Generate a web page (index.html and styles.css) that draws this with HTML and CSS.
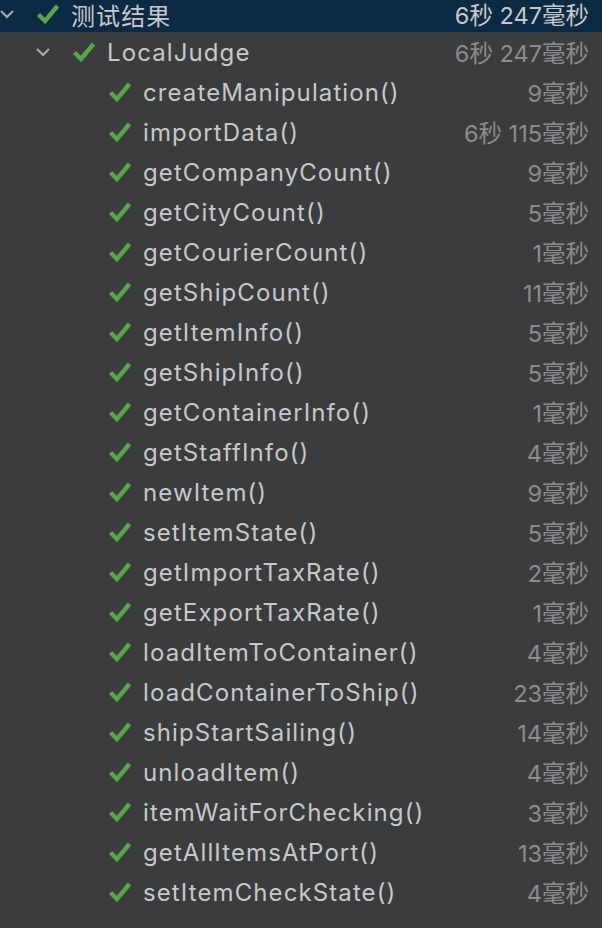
FILE: index.html
```html
<!DOCTYPE html>
<html>
<head>
<meta charset="utf-8">
<link rel="stylesheet" href="styles.css">
</head>
<body>
<div class="tree">
  <div class="row root">
    <span class="chev"><svg viewBox="0 0 16 10" width="16" height="10"><path d="M2 2 L8 8 L14 2" fill="none" stroke="#a9abad" stroke-width="2"/></svg></span>
    <span class="check"><svg viewBox="0 0 24 22" width="24" height="22"><path d="M2.5 11.5 L9 18 L21.5 3" fill="none" stroke="#5aa54a" stroke-width="4.4"/></svg></span>
    <span class="name">测试结果</span>
    <span class="time">6秒 247毫秒</span>
  </div>
  <div class="row suite">
    <span class="chev"><svg viewBox="0 0 16 10" width="16" height="10"><path d="M2 2 L8 8 L14 2" fill="none" stroke="#a9abad" stroke-width="2"/></svg></span>
    <span class="check"><svg viewBox="0 0 24 22" width="24" height="22"><path d="M2.5 11.5 L9 18 L21.5 3" fill="none" stroke="#5aa54a" stroke-width="4.4"/></svg></span>
    <span class="name">LocalJudge</span>
    <span class="time">6秒 247毫秒</span>
  </div>
  <div class="row test"><span class="check"><svg viewBox="0 0 24 22" width="24" height="22"><path d="M2.5 11.5 L9 18 L21.5 3" fill="none" stroke="#5aa54a" stroke-width="4.4"/></svg></span><span class="name">createManipulation()</span><span class="time">9毫秒</span></div>
  <div class="row test"><span class="check"><svg viewBox="0 0 24 22" width="24" height="22"><path d="M2.5 11.5 L9 18 L21.5 3" fill="none" stroke="#5aa54a" stroke-width="4.4"/></svg></span><span class="name">importData()</span><span class="time">6秒 115毫秒</span></div>
  <div class="row test"><span class="check"><svg viewBox="0 0 24 22" width="24" height="22"><path d="M2.5 11.5 L9 18 L21.5 3" fill="none" stroke="#5aa54a" stroke-width="4.4"/></svg></span><span class="name">getCompanyCount()</span><span class="time">9毫秒</span></div>
  <div class="row test"><span class="check"><svg viewBox="0 0 24 22" width="24" height="22"><path d="M2.5 11.5 L9 18 L21.5 3" fill="none" stroke="#5aa54a" stroke-width="4.4"/></svg></span><span class="name">getCityCount()</span><span class="time">5毫秒</span></div>
  <div class="row test"><span class="check"><svg viewBox="0 0 24 22" width="24" height="22"><path d="M2.5 11.5 L9 18 L21.5 3" fill="none" stroke="#5aa54a" stroke-width="4.4"/></svg></span><span class="name">getCourierCount()</span><span class="time">1毫秒</span></div>
  <div class="row test"><span class="check"><svg viewBox="0 0 24 22" width="24" height="22"><path d="M2.5 11.5 L9 18 L21.5 3" fill="none" stroke="#5aa54a" stroke-width="4.4"/></svg></span><span class="name">getShipCount()</span><span class="time">11毫秒</span></div>
  <div class="row test"><span class="check"><svg viewBox="0 0 24 22" width="24" height="22"><path d="M2.5 11.5 L9 18 L21.5 3" fill="none" stroke="#5aa54a" stroke-width="4.4"/></svg></span><span class="name">getItemInfo()</span><span class="time">5毫秒</span></div>
  <div class="row test"><span class="check"><svg viewBox="0 0 24 22" width="24" height="22"><path d="M2.5 11.5 L9 18 L21.5 3" fill="none" stroke="#5aa54a" stroke-width="4.4"/></svg></span><span class="name">getShipInfo()</span><span class="time">5毫秒</span></div>
  <div class="row test"><span class="check"><svg viewBox="0 0 24 22" width="24" height="22"><path d="M2.5 11.5 L9 18 L21.5 3" fill="none" stroke="#5aa54a" stroke-width="4.4"/></svg></span><span class="name">getContainerInfo()</span><span class="time">1毫秒</span></div>
  <div class="row test"><span class="check"><svg viewBox="0 0 24 22" width="24" height="22"><path d="M2.5 11.5 L9 18 L21.5 3" fill="none" stroke="#5aa54a" stroke-width="4.4"/></svg></span><span class="name">getStaffInfo()</span><span class="time">4毫秒</span></div>
  <div class="row test"><span class="check"><svg viewBox="0 0 24 22" width="24" height="22"><path d="M2.5 11.5 L9 18 L21.5 3" fill="none" stroke="#5aa54a" stroke-width="4.4"/></svg></span><span class="name">newItem()</span><span class="time">9毫秒</span></div>
  <div class="row test"><span class="check"><svg viewBox="0 0 24 22" width="24" height="22"><path d="M2.5 11.5 L9 18 L21.5 3" fill="none" stroke="#5aa54a" stroke-width="4.4"/></svg></span><span class="name">setItemState()</span><span class="time">5毫秒</span></div>
  <div class="row test"><span class="check"><svg viewBox="0 0 24 22" width="24" height="22"><path d="M2.5 11.5 L9 18 L21.5 3" fill="none" stroke="#5aa54a" stroke-width="4.4"/></svg></span><span class="name">getImportTaxRate()</span><span class="time">2毫秒</span></div>
  <div class="row test"><span class="check"><svg viewBox="0 0 24 22" width="24" height="22"><path d="M2.5 11.5 L9 18 L21.5 3" fill="none" stroke="#5aa54a" stroke-width="4.4"/></svg></span><span class="name">getExportTaxRate()</span><span class="time">1毫秒</span></div>
  <div class="row test"><span class="check"><svg viewBox="0 0 24 22" width="24" height="22"><path d="M2.5 11.5 L9 18 L21.5 3" fill="none" stroke="#5aa54a" stroke-width="4.4"/></svg></span><span class="name">loadItemToContainer()</span><span class="time">4毫秒</span></div>
  <div class="row test"><span class="check"><svg viewBox="0 0 24 22" width="24" height="22"><path d="M2.5 11.5 L9 18 L21.5 3" fill="none" stroke="#5aa54a" stroke-width="4.4"/></svg></span><span class="name">loadContainerToShip()</span><span class="time">23毫秒</span></div>
  <div class="row test"><span class="check"><svg viewBox="0 0 24 22" width="24" height="22"><path d="M2.5 11.5 L9 18 L21.5 3" fill="none" stroke="#5aa54a" stroke-width="4.4"/></svg></span><span class="name">shipStartSailing()</span><span class="time">14毫秒</span></div>
  <div class="row test"><span class="check"><svg viewBox="0 0 24 22" width="24" height="22"><path d="M2.5 11.5 L9 18 L21.5 3" fill="none" stroke="#5aa54a" stroke-width="4.4"/></svg></span><span class="name">unloadItem()</span><span class="time">4毫秒</span></div>
  <div class="row test"><span class="check"><svg viewBox="0 0 24 22" width="24" height="22"><path d="M2.5 11.5 L9 18 L21.5 3" fill="none" stroke="#5aa54a" stroke-width="4.4"/></svg></span><span class="name">itemWaitForChecking()</span><span class="time">3毫秒</span></div>
  <div class="row test"><span class="check"><svg viewBox="0 0 24 22" width="24" height="22"><path d="M2.5 11.5 L9 18 L21.5 3" fill="none" stroke="#5aa54a" stroke-width="4.4"/></svg></span><span class="name">getAllItemsAtPort()</span><span class="time">13毫秒</span></div>
  <div class="row test"><span class="check"><svg viewBox="0 0 24 22" width="24" height="22"><path d="M2.5 11.5 L9 18 L21.5 3" fill="none" stroke="#5aa54a" stroke-width="4.4"/></svg></span><span class="name">setItemCheckState()</span><span class="time">4毫秒</span></div>
</div>
</body>
</html>
```
FILE: styles.css
```css
html, body {
  margin: 0;
  padding: 0;
  background: #3b3c3e;
  height: 100%;
}
body {
  font-family: Inter, "Noto Sans CJK SC", sans-serif;
  font-size: 23px;
  color: #c7c8c9;
  overflow: hidden;
}
.tree {
  display: flex;
  flex-direction: column;
}
.row {
  display: flex;
  align-items: center;
  height: 40px;
  padding-right: 13px;
  white-space: nowrap;
}
.root {
  height: 32px;
  box-sizing: border-box;
  padding-bottom: 5px;
  background: #0d2a45;
  padding-left: 0;
}
.root .chev { width: 37px; margin-left: -1px; }
.suite { padding-left: 35px; }
.suite .chev { width: 37px; }
.test { padding-left: 108px; }
.chev {
  display: flex;
  align-items: center;
}
.check {
  display: flex;
  align-items: center;
  width: 35px;
  flex: none;
}
.name {
  flex: 1;
  font-size: 24px;
  letter-spacing: 1.1px;
  padding-top: 1px;
}
.time {
  color: #8b8c8d;
  font-size: 23.5px;
}
.root .time { color: #c7c8c9; }
```
